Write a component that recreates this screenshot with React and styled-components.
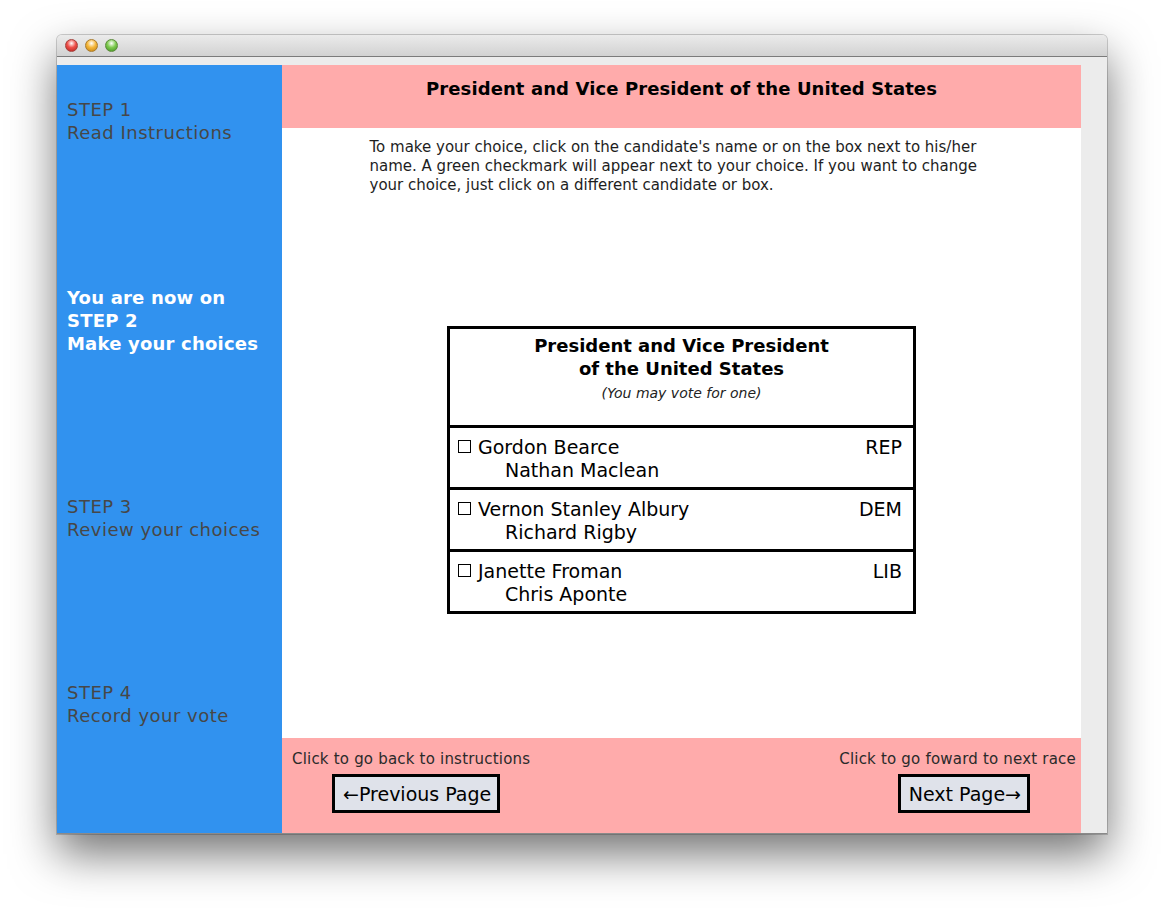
import React from 'react';
import styled, { createGlobalStyle } from 'styled-components';

const GlobalStyle = createGlobalStyle`
    html, body {
        margin: 0;
        padding: 0;
        background: #ffffff;
    }
    body {
        font-family: "DejaVu Sans", "Liberation Sans", sans-serif;
    }
`;

const Page = styled.div`
    padding: 35px 57px 80px 57px;
    width: 1164px;
    box-sizing: border-box;
`;

const Window = styled.div`
    width: 1050px;
    background: #ececec;
    border-radius: 5px 5px 0 0;
    box-shadow: 0 20px 45px rgba(0, 0, 0, 0.55), 0 0 0 1px rgba(0, 0, 0, 0.18);
    overflow: hidden;
`;

const TitleBar = styled.div`
    height: 21px;
    display: flex;
    align-items: center;
    gap: 7px;
    padding-left: 8px;
    background: linear-gradient(#ebebeb, #d2d2d2);
    border-bottom: 1px solid #7b7b7b;
`;

const Light = styled.span`
    width: 13px;
    height: 13px;
    border-radius: 50%;
    box-sizing: border-box;
    border: 1px solid ${p => p.$edge};
    background: radial-gradient(circle at 50% 30%, #ffffff 0, ${p => p.$color} 45%, ${p => p.$dark} 100%);
`;

const Body = styled.div`
    display: flex;
    margin-top: 8px;
    height: 768px;
    padding-right: 26px;
    border-bottom: 1px solid #8a8a8a;
`;

const Sidebar = styled.div`
    width: 225px;
    flex: none;
    background: #3192ef;
    display: flex;
    flex-direction: column;
`;

const Step = styled.div`
    margin-top: ${p => p.$top}px;
    padding-left: 10px;
    font-size: 18px;
    line-height: 23px;
    color: ${p => p.$current ? '#ffffff' : '#474747'};
    font-weight: ${p => p.$current ? 'bold' : 'normal'};
    letter-spacing: ${p => p.$current ? '0.2px' : '0.5px'};
`;

const Main = styled.div`
    flex: 1;
    display: flex;
    flex-direction: column;
    background: #ffffff;
`;

const Header = styled.div`
    height: 63px;
    background: #ffabab;
    display: flex;
    justify-content: center;
    padding-top: 13px;
    box-sizing: border-box;
    font-size: 18px;
    font-weight: bold;
    letter-spacing: 0.1px;
    color: #000;
`;

const Instructions = styled.div`
    width: 624px;
    margin: 10px auto 0 auto;
    font-size: 15px;
    line-height: 19px;
    color: #1e1e1e;
    white-space: nowrap;
`;

const BallotArea = styled.div`
    flex: 1;
    display: flex;
    align-items: center;
    justify-content: center;
`;

const Ballot = styled.div`
    width: 469px;
    margin-top: 6px;
    box-sizing: border-box;
    border: 3px solid #000;
    color: #000;
`;

const BallotHead = styled.div`
    height: 96px;
    display: flex;
    flex-direction: column;
    align-items: center;
    padding-top: 5px;
    box-sizing: border-box;
`;

const BallotTitle = styled.div`
    font-size: 18px;
    font-weight: bold;
    line-height: 23px;
    text-align: center;
`;

const BallotNote = styled.div`
    font-size: 14px;
    font-style: italic;
    line-height: 27px;
    color: #222;
`;

const Row = styled.div`
    height: 62px;
    border-top: 3px solid #000;
    box-sizing: border-box;
    display: flex;
    justify-content: space-between;
    padding: 8px 11px 0 8px;
    font-size: 19px;
    line-height: 23px;
`;

const Names = styled.div`
    display: flex;
    flex-direction: column;
`;

const Choice = styled.div`
    display: flex;
    align-items: center;
    gap: 7px;
`;

const Box = styled.span`
    width: 13px;
    height: 13px;
    box-sizing: border-box;
    border: 1px solid #000;
    margin-top: -2px;
`;

const Mate = styled.div`
    padding-left: 47px;
`;

const Footer = styled.div`
    height: 95px;
    background: #ffabab;
    display: flex;
    justify-content: space-between;
    padding: 12px 5px 0 10px;
    box-sizing: border-box;
`;

const Nav = styled.div`
    display: flex;
    flex-direction: column;
    align-items: ${p => p.$align};
    gap: 6px;
`;

const NavLabel = styled.div`
    font-size: 15px;
    line-height: 18px;
    letter-spacing: 0.2px;
    color: #2a2a2a;
`;

const NavButton = styled.button`
    height: 39px;
    padding: 0 6px 0 8px;
    margin: ${p => p.$margin};
    box-sizing: border-box;
    border: 3px solid #000;
    background: #dfe2ea;
    font-family: "DejaVu Sans", "Liberation Sans", sans-serif;
    font-size: 19px;
    color: #000;
    cursor: pointer;
`;

const candidates = [
    { name: 'Gordon Bearce', mate: 'Nathan Maclean', party: 'REP' },
    { name: 'Vernon Stanley Albury', mate: 'Richard Rigby', party: 'DEM' },
    { name: 'Janette Froman', mate: 'Chris Aponte', party: 'LIB' },
];

export default function App() {
    return (
        <Page>
            <GlobalStyle />
            <Window>
                <TitleBar>
                    <Light $color="#f0504a" $dark="#b3201c" $edge="#a4403c" />
                    <Light $color="#f6b83a" $dark="#c07f10" $edge="#a97a2c" />
                    <Light $color="#7fcc4f" $dark="#3f8e20" $edge="#5b8a3a" />
                </TitleBar>
                <Body>
                    <Sidebar>
                        <Step $top={33}>STEP 1<br />Read Instructions</Step>
                        <Step $top={142} $current>You are now on<br />STEP 2<br />Make your choices</Step>
                        <Step $top={140}>STEP 3<br />Review your choices</Step>
                        <Step $top={140}>STEP 4<br />Record your vote</Step>
                    </Sidebar>
                    <Main>
                        <Header>President and Vice President of the United States</Header>
                        <Instructions>
                            To make your choice, click on the candidate's name or on the box next to his/her<br />
                            name. A green checkmark will appear next to your choice. If you want to change<br />
                            your choice, just click on a different candidate or box.
                        </Instructions>
                        <BallotArea>
                            <Ballot>
                                <BallotHead>
                                    <BallotTitle>President and Vice President<br />of the United States</BallotTitle>
                                    <BallotNote>(You may vote for one)</BallotNote>
                                </BallotHead>
                                {candidates.map(c => (
                                    <Row key={c.party}>
                                        <Names>
                                            <Choice><Box />{c.name}</Choice>
                                            <Mate>{c.mate}</Mate>
                                        </Names>
                                        <span>{c.party}</span>
                                    </Row>
                                ))}
                            </Ballot>
                        </BallotArea>
                        <Footer>
                            <Nav $align="flex-start">
                                <NavLabel>Click to go back to instructions</NavLabel>
                                <NavButton $margin="0 0 0 40px">←Previous Page</NavButton>
                            </Nav>
                            <Nav $align="flex-end">
                                <NavLabel>Click to go foward to next race</NavLabel>
                                <NavButton $margin="0 46px 0 0">Next Page→</NavButton>
                            </Nav>
                        </Footer>
                    </Main>
                </Body>
            </Window>
        </Page>
    );
}
